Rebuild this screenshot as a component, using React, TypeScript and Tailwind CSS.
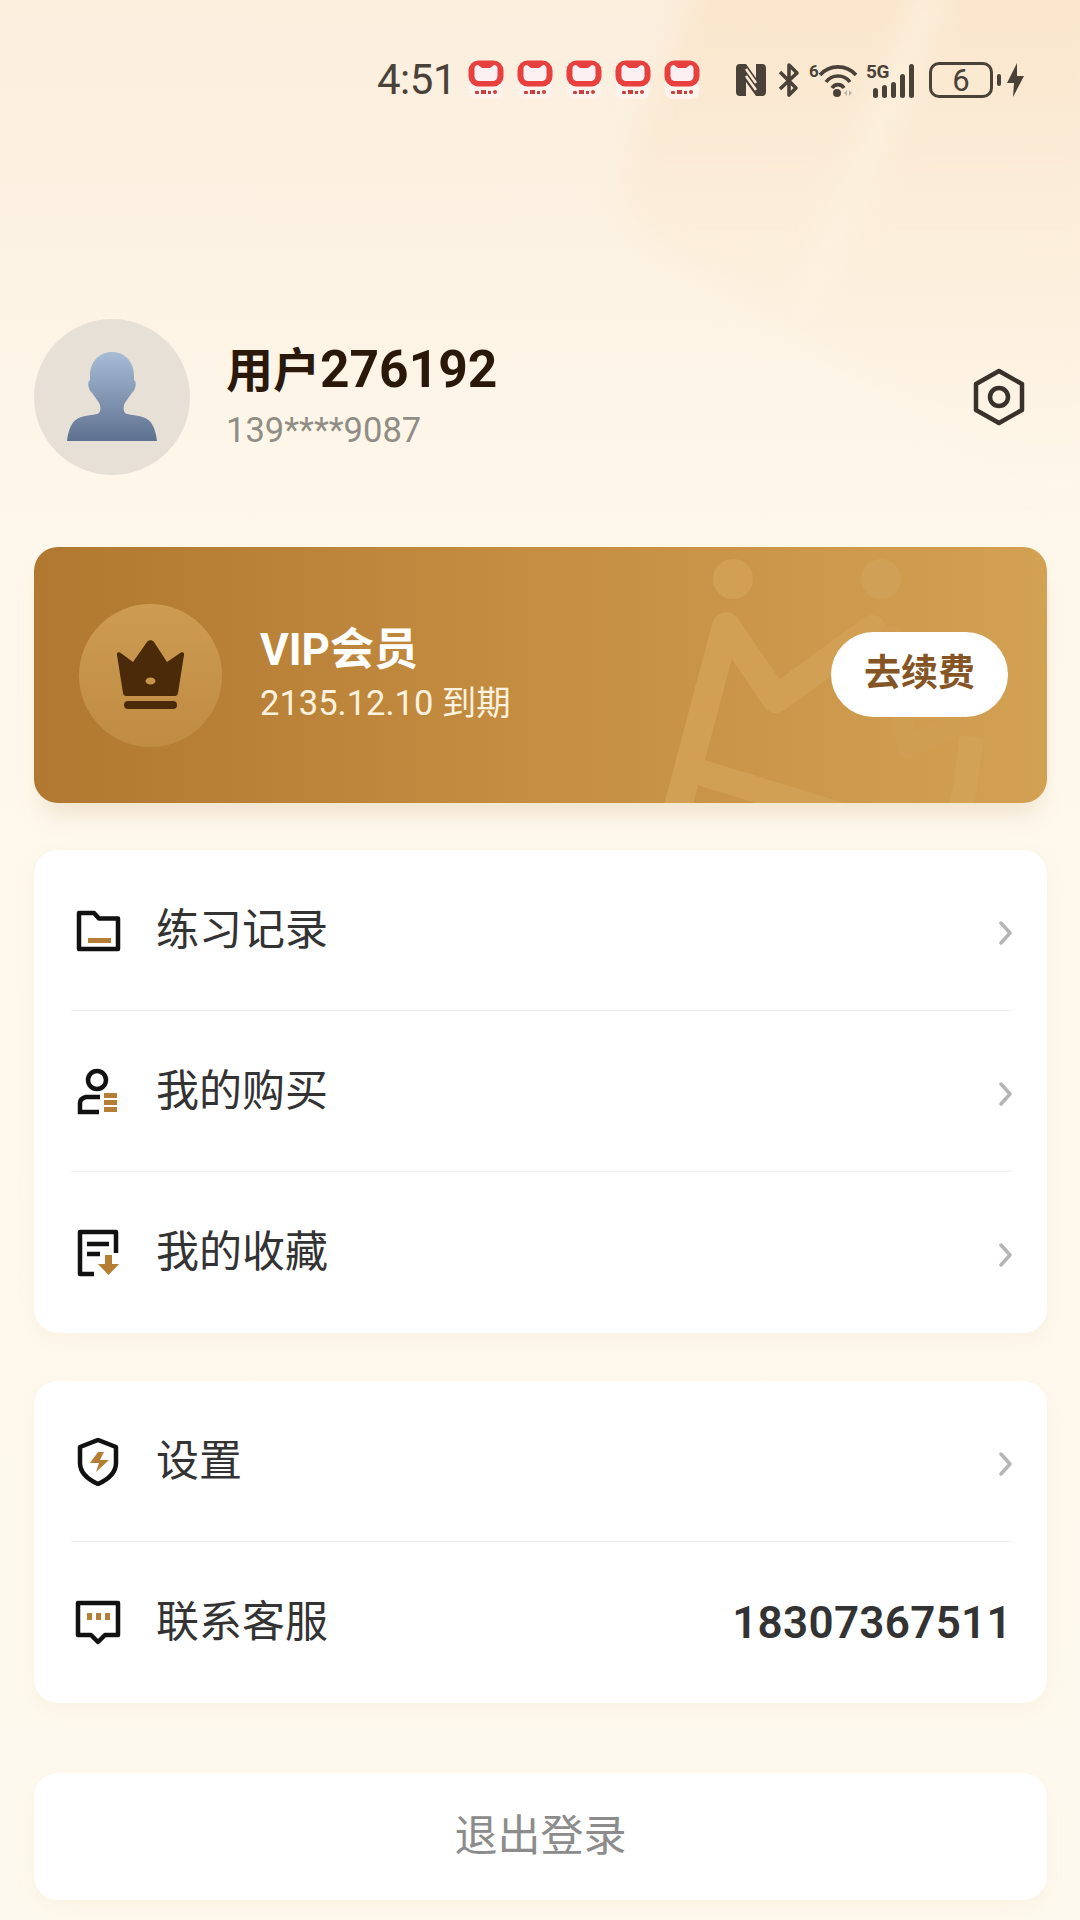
const font = "font-['Roboto','Noto_Sans_CJK_SC',sans-serif]";

function AppBadge() {
    return (
        <svg width="36" height="40" viewBox="0 0 36 40">
            <rect x="1" y="8" width="34" height="31" rx="7" fill="#fdf3ec" />
            <rect x="0.500" y="0.500" width="35" height="26" rx="10" fill="#e8403f" />
            <path d="M10 5l4 3h8l4-3c2 0 3.500 1.500 3.500 3.500V16c0 3-2 5-5 5h-13c-3 0-5-2-5-5V8.500C6.500 6.500 8 5 10 5z" fill="#fdf0f2" />
            <g fill="#c8403f">
                <rect x="7" y="31" width="4" height="3" rx="1" />
                <rect x="13" y="30" width="5" height="4" />
                <rect x="20" y="31" width="3" height="3" />
                <rect x="25" y="30" width="4" height="4" rx="2" />
            </g>
        </svg>
    );
}

function StatusBar() {
    const ink = '#4a4238';
    return (
        <div className="flex items-center h-[40px] mt-[60px] pl-[377px]" style={{ color: ink }}>
            <span className="text-[42px] leading-none font-['Roboto',sans-serif] w-[78px] tracking-[-0.5px]">4:51</span>
            <div className="flex gap-[13px] ml-[13px]">
                <AppBadge />
                <AppBadge />
                <AppBadge />
                <AppBadge />
                <AppBadge />
            </div>
            {/* nfc */}
            <svg className="ml-[35px]" width="32" height="34" viewBox="0 0 32 34">
                <path d="M5 1h6l10 14V1h6a4 4 0 0 1 4 4v24a4 4 0 0 1-4 4h-6L11 19v14H5a4 4 0 0 1-4-4V5a4 4 0 0 1 4-4z" fill={ink} />
                <path d="M11 6l10 14M11 13l10 14" stroke="#fbe9d3" strokeWidth="2.500" fill="none" />
            </svg>
            {/* bluetooth */}
            <svg className="ml-[10px]" width="24" height="36" viewBox="0 0 24 36" fill="none" stroke={ink} strokeWidth="3.600" strokeLinejoin="round">
                <path d="M3 10l16 16-7 7V3l8 8L3 27" />
            </svg>
            {/* wifi */}
            <div className="relative w-[50px] h-[36px] ml-[8px]">
                <span className="absolute left-0 top-0 text-[17px] leading-[18px] font-bold font-['Roboto',sans-serif]">6</span>
                <svg className="absolute left-0 top-0" width="50" height="36" viewBox="0 0 50 36" fill="none">
                    <path d="M11 13a24 24 0 0 1 36 0M17 20a15 15 0 0 1 24 0M23 26a7 7 0 0 1 12 0" stroke={ink} strokeWidth="3.600" />
                    <circle cx="28" cy="31" r="4" fill={ink} />
                    <path d="M35 31l3-3v6zM40 28l3 3-3 3z" fill="#b9b2a8" />
                </svg>
            </div>
            {/* 5g signal */}
            <div className="relative w-[50px] h-[36px] ml-[7px]">
                <span className="absolute left-0 top-0 text-[19px] leading-[20px] font-bold font-['Roboto',sans-serif] tracking-[-0.5px]">5G</span>
                <div className="absolute left-[7px] bottom-0 flex items-end gap-[4px]">
                    <div className="w-[5px] h-[10px] rounded-full bg-[#4a4238]" />
                    <div className="w-[5px] h-[13px] rounded-full bg-[#4a4238]" />
                    <div className="w-[5px] h-[16px] rounded-full bg-[#4a4238]" />
                    <div className="w-[5px] h-[24px] rounded-full bg-[#4a4238]" />
                    <div className="w-[5px] h-[34px] rounded-full bg-[#4a4238]" />
                </div>
            </div>
            {/* battery */}
            <div className="ml-[13px] w-[64px] h-[36px] rounded-[10px] border-[3px] border-[#4a4238] flex items-center justify-center text-[31px] leading-none font-['Roboto',sans-serif]">6</div>
            <div className="ml-[4px] w-[4px] h-[12px] rounded-full bg-[#4a4238]" />
            <svg className="ml-[5px]" width="19" height="34" viewBox="0 0 19 34">
                <path d="M11 0L1 20h7l-1 14 11-21h-7z" fill={ink} />
            </svg>
        </div>
    );
}

function Avatar() {
    return (
        <div className="w-[156px] h-[156px] rounded-full bg-[#e6e0d6] flex items-center justify-center">
            <svg width="90" height="90" viewBox="0 0 90 90">
                <defs>
                    <linearGradient id="bust" x1="0" y1="0" x2="0" y2="1">
                        <stop offset="0" stopColor="#a9bcd6" />
                        <stop offset="1" stopColor="#5e7190" />
                    </linearGradient>
                </defs>
                <path d="M45 0c-13 0-22 10-22 24v4c-3 2-2 9 2 13 3 4 7 9 8 12 1 5 0 8-3 9-3 1-14 1-20 5C4 70 1 80 0 89h90c-1-9-4-19-10-22-6-4-17-4-20-5-3-1-4-4-3-9 1-3 5-8 8-12 4-4 5-11 2-13v-4C67 10 58 0 45 0z" fill="url(#bust)" />
            </svg>
        </div>
    );
}

function Crown() {
    return (
        <svg width="70" height="72" viewBox="0 0 70 72">
            <path d="M1 16c-.5-2 1-3.500 3-2.500L17 23 31 3c2-2.500 5-2.500 7 0l13 20 14-9.500c2-1 3.500.5 3 2.500l-6 38c-.3 2-1.500 3-3 3H10c-1.500 0-2.700-1-3-3z" fill="#4a2a08" />
            <ellipse cx="34.500" cy="42" rx="5" ry="3.500" fill="#c8934a" />
            <rect x="8" y="62" width="53" height="8" rx="4" fill="#4a2a08" />
        </svg>
    );
}

function VipCard() {
    return (
        <div className="relative ml-[34px] mr-[33px] mt-[72px] h-[256px] rounded-[24px] overflow-hidden bg-gradient-to-r from-[#b07830] via-[#c58e42] to-[#d3a153] shadow-[0_18px_24px_-8px_rgba(170,130,60,0.18)]">
            {/* watermark figure */}
            <svg className="absolute left-0 top-0" width="1013" height="256" viewBox="0 0 1013 256" fill="none" stroke="#d2a054" strokeLinecap="round" strokeLinejoin="round">
                <circle cx="699" cy="32" r="20" fill="#d2a054" stroke="none" />
                <circle cx="847" cy="32" r="20" fill="#d0a056" stroke="none" />
                <path d="M640 275L692 79l50 73 96-70" strokeWidth="28" />
                <path d="M655 222l190 58" strokeWidth="26" strokeLinecap="butt" />
                <path d="M856 90l18 110 46-22" strokeWidth="22" stroke="#cf9e52" />
                <path d="M938 190l-10 70" strokeWidth="24" stroke="#d2a256" strokeLinecap="butt" />
            </svg>
            <div className="relative flex items-center h-full pl-[45px] pr-[39px]">
                <div className="w-[143px] h-[143px] rounded-full bg-gradient-to-b from-[#cd9b52] to-[#c08c44] flex items-center justify-center">
                    <Crown />
                </div>
                <div className="ml-[38px] flex-1 flex flex-col">
                    <span className="text-[44px] leading-[48px] font-bold text-white">VIP会员</span>
                    <span className="text-[34.5px] leading-[42px] mt-[8px] text-[#fdf2df]">2135.12.10 到期</span>
                </div>
                <div className="w-[177px] h-[85px] rounded-full bg-white flex items-center justify-center text-[37px] font-bold text-[#855526] -mt-[2px]">去续费</div>
            </div>
        </div>
    );
}

const ic = '#111111';
const gold = '#b57e34';

function FolderIcon() {
    return (
        <svg width="48" height="48" viewBox="0 0 48 48" fill="none">
            <path d="M5 6h15l5 5.500h19V42H5z" stroke={ic} strokeWidth="4.500" strokeLinejoin="round" />
            <rect x="14" y="31" width="23" height="5" fill={gold} />
        </svg>
    );
}

function PersonIcon() {
    return (
        <svg width="48" height="48" viewBox="0 0 48 48" fill="none">
            <circle cx="23" cy="12" r="9" stroke={ic} strokeWidth="4.500" />
            <path d="M26 29H12c-4 1-6 3-6 6v9h19" stroke={ic} strokeWidth="4.500" />
            <g fill={gold}>
                <rect x="30" y="25" width="13" height="5" />
                <rect x="30" y="32" width="13" height="5" />
                <rect x="30" y="39" width="13" height="5" />
            </g>
        </svg>
    );
}

function DocIcon() {
    return (
        <svg width="48" height="48" viewBox="0 0 48 48" fill="none">
            <path d="M20 45H6V3h36v21" stroke={ic} strokeWidth="4.500" strokeLinejoin="round" />
            <path d="M13 15h22M13 25h13" stroke={ic} strokeWidth="4.500" />
            <path d="M31 26h7v9h7l-10.500 11L24 35h7z" fill={gold} />
        </svg>
    );
}

function ShieldIcon() {
    return (
        <svg width="48" height="48" viewBox="0 0 48 48" fill="none">
            <path d="M24 2l18 7v16c0 9-7 16-18 21C13 41 6 34 6 25V9z" stroke={ic} strokeWidth="4.500" strokeLinejoin="round" />
            <path d="M24 14h6l-4 8h9L22 34l3-9h-9z" fill={gold} />
        </svg>
    );
}

function ChatIcon() {
    return (
        <svg width="48" height="48" viewBox="0 0 48 48" fill="none">
            <path d="M4 4h40v32H31l-7 7-7-7H4z" stroke={ic} strokeWidth="4.500" strokeLinejoin="round" />
            <g fill={gold}>
                <rect x="13" y="14" width="5" height="7" />
                <rect x="22" y="14" width="5" height="7" />
                <rect x="31" y="14" width="5" height="7" />
            </g>
        </svg>
    );
}

function Chevron() {
    return (
        <svg className="mt-[4px] -mr-[1px]" width="14" height="24" viewBox="0 0 14 24" fill="none">
            <path d="M2 2l9 10-9 10" stroke="#b5b5b5" strokeWidth="3.500" strokeLinecap="round" strokeLinejoin="round" />
        </svg>
    );
}

function Row({ icon, label, right, line }: { icon: React.ReactNode; label: string; right?: React.ReactNode; line?: boolean }) {
    return (
        <div className="relative h-[161px] flex items-center pl-[40px] pr-[35px]">
            {icon}
            <span className="ml-[34px] text-[43px] text-[#333333] flex-1 -mt-[1px]">{label}</span>
            {right ?? <Chevron />}
            {line && <div className="absolute left-[37px] right-[35px] bottom-0 h-[1px] bg-[#efefef]" />}
        </div>
    );
}

export default function App() {
    return (
        <div className={`relative w-[1080px] h-[1920px] overflow-hidden bg-gradient-to-b from-[#fbeedd] via-[#fef8ec] via-[30%] to-[#fef9ee] ${font}`}>
            {/* soft background shapes, top right */}
            <svg className="absolute left-0 top-0" width="1080" height="560" viewBox="0 0 1080 560" fill="none">
                <defs>
                    <filter id="soft"><feGaussianBlur stdDeviation="14" /></filter>
                    <linearGradient id="wash" x1="0" y1="0" x2="0" y2="1">
                        <stop offset="0" stopColor="#fadfbd" stopOpacity="0.55" />
                        <stop offset="0.6" stopColor="#fbe8cf" stopOpacity="0.35" />
                        <stop offset="1" stopColor="#fdf0dc" stopOpacity="0" />
                    </linearGradient>
                </defs>
                <g filter="url(#soft)">
                    <path d="M700 -20h400v520h-60L860 370 660 250c-40-30-45-60-35-90z" fill="url(#wash)" />
                    <path d="M935 -10L800 320" stroke="#fdf3e2" strokeWidth="26" opacity="0.7" />
                </g>
            </svg>

            <div className="relative flex flex-col">
                <StatusBar />

                {/* profile */}
                <div className="flex items-center mt-[219px] pl-[34px] pr-[55px]">
                    <Avatar />
                    <div className="ml-[36px] flex-1 flex flex-col -mt-[1px]">
                        <span className="text-[47px] leading-[56px] font-bold text-[#2a180a]">用户<span className="text-[51.5px]">276192</span></span>
                        <span className="text-[34.5px] leading-[42px] mt-[10px] text-[#8f8d85]">139****9087</span>
                    </div>
                    <svg width="52" height="58" viewBox="0 0 52 58" fill="none">
                        <path d="M26 3l23 13v26L26 55 3 42V16z" stroke="#38322a" strokeWidth="4.500" strokeLinejoin="round" />
                        <circle cx="26" cy="29" r="9" stroke="#38322a" strokeWidth="4.500" />
                    </svg>
                </div>

                <VipCard />

                <div className="ml-[34px] mr-[33px] mt-[47px] rounded-[24px] bg-white shadow-[0_8px_20px_rgba(190,160,110,0.08)]">
                    <Row icon={<FolderIcon />} label="练习记录" line />
                    <Row icon={<PersonIcon />} label="我的购买" line />
                    <Row icon={<DocIcon />} label="我的收藏" />
                </div>

                <div className="ml-[34px] mr-[33px] mt-[48px] rounded-[24px] bg-white shadow-[0_8px_20px_rgba(190,160,110,0.08)]">
                    <Row icon={<ShieldIcon />} label="设置" line />
                    <Row icon={<ChatIcon />} label="联系客服" right={<span className="text-[44px] font-semibold text-[#333333] tracking-[0.3px]">18307367511</span>} />
                </div>

                <div className="ml-[34px] mr-[33px] mt-[70px] h-[127px] rounded-[24px] bg-white flex items-center justify-center text-[43px] text-[#8c8c8c] shadow-[0_8px_20px_rgba(190,160,110,0.06)]">退出登录</div>
            </div>
        </div>
    );
}
